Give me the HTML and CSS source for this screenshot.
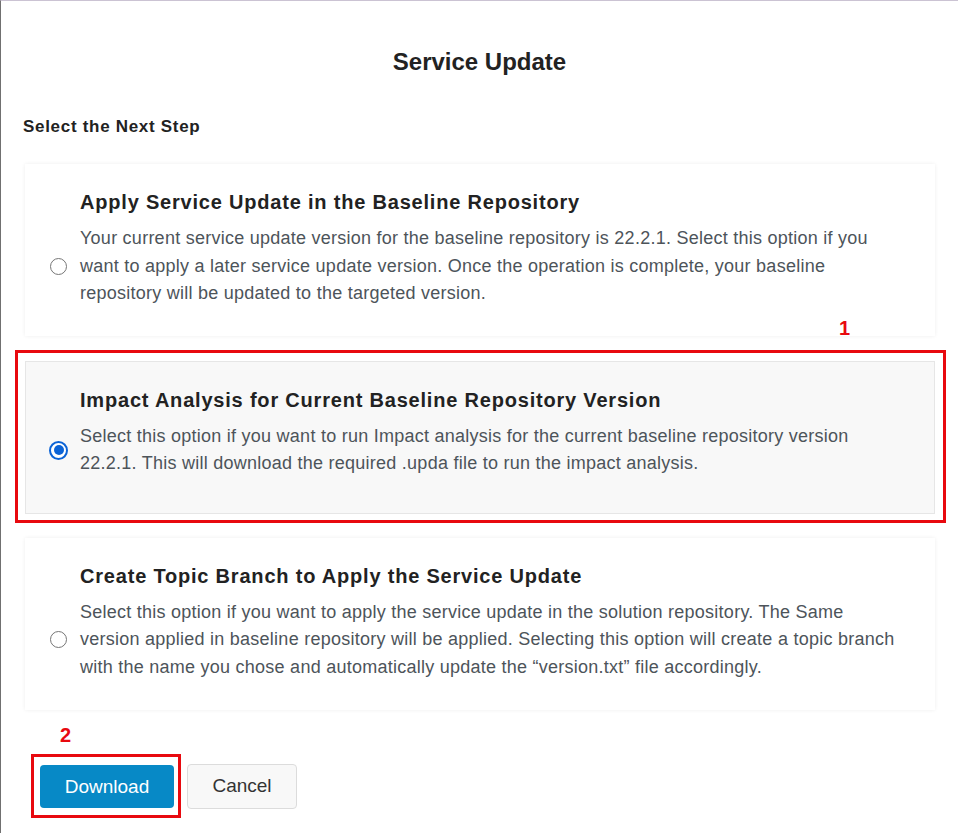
FILE: index.html
```html
<!DOCTYPE html>
<html lang="en">
<head>
    <meta charset="utf-8">
    <title>Service Update</title>
    <link rel="stylesheet" href="styles.css">
</head>
<body>
    <div class="dialog">
        <h1 class="dialog-title">Service Update</h1>

        <h2 class="step-label">Select the Next Step</h2>

        <div class="options">
            <label class="option">
                <span class="option-title">Apply Service Update in the Baseline Repository</span>
                <span class="radio"></span>
                <span class="option-text">Your current service update version for the baseline repository is 22.2.1. Select this option if you want to apply a later service update version. Once the operation is complete, your baseline repository will be updated to the targeted version.</span>
            </label>

            <div class="callout callout-option">
                <span class="callout-num num-1">1</span>
                <label class="option selected">
                    <span class="option-title">Impact Analysis for Current Baseline Repository Version</span>
                    <span class="radio checked"></span>
                    <span class="option-text">Select this option if you want to run Impact analysis for the current baseline repository version 22.2.1. This will download the required .upda file to run the impact analysis.</span>
                </label>
            </div>

            <label class="option last">
                <span class="option-title">Create Topic Branch to Apply the Service Update</span>
                <span class="radio"></span>
                <span class="option-text">Select this option if you want to apply the service update in the solution repository. The Same version applied in baseline repository will be applied. Selecting this option will create a topic branch with the name you chose and automatically update the &ldquo;version.txt&rdquo; file accordingly.</span>
            </label>
        </div>

        <div class="actions">
            <div class="callout callout-btn">
                <span class="callout-num num-2">2</span>
                <button class="btn btn-primary">Download</button>
            </div>
            <button class="btn btn-default">Cancel</button>
        </div>
    </div>
</body>
</html>
```

FILE: styles.css
```css
* {
    box-sizing: border-box;
    margin: 0;
    padding: 0;
}

html, body {
    height: 100%;
}

body {
    background: #fff;
    color: #222;
    font-family: 'Liberation Sans', Arial, sans-serif;
    border-top: 1px solid #cbc3d3;
    border-left: 1px solid #707070;
}

.dialog {
    padding: 0 22px;
}

.dialog-title {
    font-size: 24px;
    font-weight: bold;
    text-align: center;
    line-height: 28px;
    padding-top: 47px;
    color: #222;
}

.step-label {
    font-size: 17px;
    font-weight: bold;
    letter-spacing: 0.7px;
    line-height: 20px;
    margin-top: 41px;
    color: #222;
}

/* Options */
.options {
    display: flex;
    flex-direction: column;
    margin-top: 27px;
    padding-left: 2px;
}

.option {
    display: grid;
    grid-template-columns: 17px 1fr;
    column-gap: 13px;
    align-items: center;
    width: 910px;
    padding: 26px 30px 28px 25px;
    background: #fff;
    box-shadow: 0 0 4px rgba(0, 0, 0, 0.07);
    cursor: pointer;
}

.option.selected {
    background: #f8f8f8;
    border: 1px solid #e6e6e6;
    box-shadow: none;
    padding: 26px 29px 35px 24px;
}

.option.last {
    padding-bottom: 29px;
}

.callout + .option {
    margin-top: 15px;
}

.option + .callout {
    margin-top: 14px;
}

.option-title {
    grid-column: 2;
    font-size: 20px;
    font-weight: bold;
    letter-spacing: 0.8px;
    line-height: 24px;
    color: #222;
}

.option-text {
    grid-column: 2;
    font-size: 18px;
    letter-spacing: 0.25px;
    line-height: 27.5px;
    color: #4d545a;
    margin-top: 11px;
}

.radio {
    grid-column: 1;
    grid-row: 2;
    align-self: center;
    margin-top: 11px;
    width: 17px;
    height: 17px;
    border: 1.5px solid #767676;
    border-radius: 50%;
    background: #fff;
}

.radio.checked {
    width: 19px;
    height: 19px;
    margin-left: -1px;
    border: 2px solid #0b63d6;
    padding: 2.5px;
}

.radio.checked::after {
    content: '';
    display: block;
    width: 100%;
    height: 100%;
    border-radius: 50%;
    background: #0b63d6;
}

/* Red annotation boxes */
.callout {
    position: relative;
    border: 3px solid #e8090f;
}

.callout-option {
    margin-left: -10px;
    width: 931px;
    padding: 8px 9px 6px 7px;
}

.callout-num {
    position: absolute;
    color: #e8090f;
    font-weight: bold;
    font-size: 20px;
    line-height: 20px;
}

.num-1 {
    top: -35px;
    right: 93px;
}

.num-2 {
    top: -32px;
    left: 26px;
}

/* Buttons */
.actions {
    display: flex;
    align-items: center;
    gap: 6px;
    margin-top: 44px;
    padding-left: 8px;
}

.callout-btn {
    padding: 8px 4px 7px 6px;
}

.btn {
    font-family: 'Liberation Sans', Arial, sans-serif;
    font-size: 19px;
    border-radius: 4px;
    cursor: pointer;
}

.btn-primary {
    width: 134px;
    height: 43px;
    background: #0789c6;
    color: #fff;
    border: none;
}

.btn-default {
    width: 110px;
    height: 45px;
    background: #f8f8f8;
    color: #333;
    border: 1px solid #dcdcdc;
}
```
